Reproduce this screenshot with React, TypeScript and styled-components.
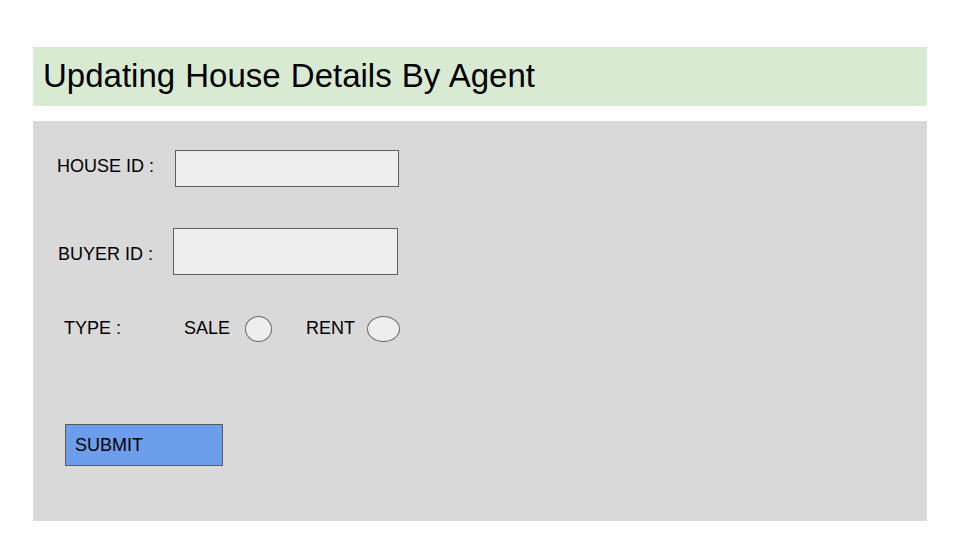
import React from "react";
import styled, { createGlobalStyle } from "styled-components";

const GlobalStyle = createGlobalStyle`
  body {
    margin: 0;
    background: #ffffff;
    font-family: "Liberation Sans", Arial, sans-serif;
    color: #000000;
  }
`;

const Page = styled.div`
  width: 894px;
  padding: 47px 0 0 33px;
`;

const Header = styled.div`
  height: 59px;
  background: #d9ead3;
  padding-left: 10px;
  box-sizing: border-box;
  font-size: 33px;
  line-height: 57px;
  word-spacing: 1px;
  white-space: nowrap;
`;

const Panel = styled.form`
  margin-top: 15px;
  height: 400px;
  background: #d9d9d9;
  display: flex;
  flex-direction: column;
  padding-top: 29px;
  box-sizing: border-box;
`;

const Row = styled.div<{ $indent: number; $height: number; $gap?: number }>`
  display: flex;
  align-items: center;
  height: ${(p) => p.$height}px;
  padding-left: ${(p) => p.$indent}px;
  margin-top: ${(p) => p.$gap ?? 0}px;
`;

const Label = styled.label<{ $width?: number; $dy?: number }>`
  font-size: 18px;
  white-space: nowrap;
  width: ${(p) => (p.$width ? `${p.$width}px` : "auto")};
  flex: none;
  ${(p) =>
    p.$dy && p.$dy > 0
      ? `margin-top: ${p.$dy * 2}px;`
      : p.$dy
      ? `margin-bottom: ${-p.$dy * 2}px;`
      : ""}
`;

const TextBox = styled.div<{ $width: number }>`
  width: ${(p) => p.$width}px;
  height: 100%;
  box-sizing: border-box;
  background: #eeeeee;
  border: 1px solid #5f5f5f;
`;

const Radio = styled.span<{ $width: number; $left: number }>`
  display: block;
  width: ${(p) => p.$width}px;
  height: 26px;
  margin-left: ${(p) => p.$left}px;
  box-sizing: border-box;
  border: 1px solid #6a6a6a;
  border-radius: 50%;
  background: #eeeeee;
`;

const Spacer = styled.span<{ $w: number }>`
  width: ${(p) => p.$w}px;
  flex: none;
`;

const Submit = styled.div`
  width: 158px;
  height: 42px;
  box-sizing: border-box;
  background: #6d9eeb;
  border: 1px solid #5a5a5a;
  display: flex;
  align-items: center;
  padding-left: 9px;
  font-size: 18px;
`;

export default function App() {
  return (
    <>
      <GlobalStyle />
      <Page>
        <Header>Updating House Details By Agent</Header>
        <Panel>
          <Row $indent={24} $height={37}>
            <Label $width={118} $dy={-2.5}>
              HOUSE ID :
            </Label>
            <TextBox $width={224} />
          </Row>
          <Row $indent={25} $height={47} $gap={41}>
            <Label $width={115} $dy={2.5}>
              BUYER ID :
            </Label>
            <TextBox $width={225} />
          </Row>
          <Row $indent={31} $height={26} $gap={41}>
            <Label $width={120} $dy={-1}>
              TYPE :
            </Label>
            <Label $dy={-1}>SALE</Label>
            <Radio $width={27} $left={15} />
            <Spacer $w={34} />
            <Label $dy={-1}>RENT</Label>
            <Radio $width={33} $left={12} />
          </Row>
          <Row $indent={32} $height={42} $gap={82}>
            <Submit>SUBMIT</Submit>
          </Row>
        </Panel>
      </Page>
    </>
  );
}
